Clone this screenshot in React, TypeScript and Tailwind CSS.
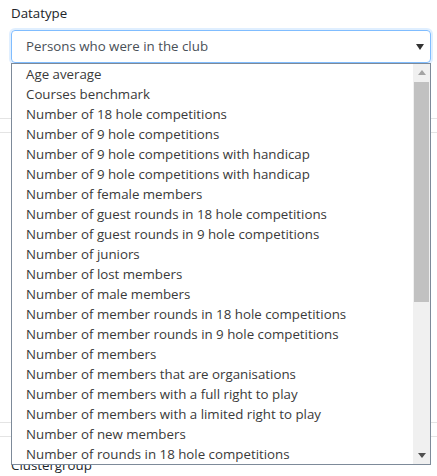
import React from 'react';

const options = [
  'Age average',
  'Courses benchmark',
  'Number of 18 hole competitions',
  'Number of 9 hole competitions',
  'Number of 9 hole competitions with handicap',
  'Number of 9 hole competitions with handicap',
  'Number of female members',
  'Number of guest rounds in 18 hole competitions',
  'Number of guest rounds in 9 hole competitions',
  'Number of juniors',
  'Number of lost members',
  'Number of male members',
  'Number of member rounds in 18 hole competitions',
  'Number of member rounds in 9 hole competitions',
  'Number of members',
  'Number of members that are organisations',
  'Number of members with a full right to play',
  'Number of members with a limited right to play',
  'Number of new members',
  'Number of rounds in 18 hole competitions',
];

export default function App() {
  return (
    <div
      className="relative w-[437px] h-[476px] overflow-hidden bg-white text-[#212529]"
      style={{ fontFamily: '"Open Sans", "Noto Sans", sans-serif' }}
    >
      {/* form behind the open list */}
      <div className="pl-[11px] pt-[3px] text-[13.3px] leading-[20px]">Datatype</div>

      <div className="mt-[7px] ml-[11px] w-[420px] h-[33px] rounded-[4px] border border-[#80bdff] shadow-[0_0_0_2px_rgba(0,123,255,0.12)] flex items-center justify-between pl-[14px] pr-[6px] text-[13.3px] text-[#495057]">
        <span>Persons who were in the club</span>
        <svg width="8" height="6" viewBox="0 0 8 6"><path d="M0 0L8 0L4 6Z" fill="#333" /></svg>
      </div>

      <div className="mt-[55px] border-t border-[#e4e4e4]" />
      <div className="mt-[13px] border-t border-[#e4e4e4]" />
      <div className="mt-[289px] border-t border-[#e4e4e4]" />
      <div className="mt-[13px] border-t border-[#e4e4e4]" />
      <div className="pl-[11px] pt-[18px] text-[13.3px] leading-[20px]">Clustergroup</div>

      {/* open dropdown list */}
      <div className="absolute left-[11px] top-[63px] w-[420px] h-[402px] bg-white border border-[#7d8a99] flex">
        <ul className="flex-1">
          {options.map((o, i) => (
            <li key={i} className="h-[20px] pl-[14px] text-[13.3px] leading-[20px] text-[#3a3a3a] whitespace-nowrap">
              {o}
            </li>
          ))}
        </ul>
        <div className="w-[17px] bg-[#f0f0f0] flex flex-col items-center">
          <div className="h-[17px] flex items-center justify-center">
            <svg width="8" height="5" viewBox="0 0 8 5"><path d="M0 5L4 0L8 5Z" fill="#a3a3a3" /></svg>
          </div>
          <div className="w-[15px] h-[220px] bg-[#c1c1c1] mt-[1px]" />
          <div className="flex-1" />
          <div className="h-[17px] flex items-center justify-center">
            <svg width="8" height="5" viewBox="0 0 8 5"><path d="M0 0L8 0L4 5Z" fill="#505050" /></svg>
          </div>
        </div>
      </div>
    </div>
  );
}
